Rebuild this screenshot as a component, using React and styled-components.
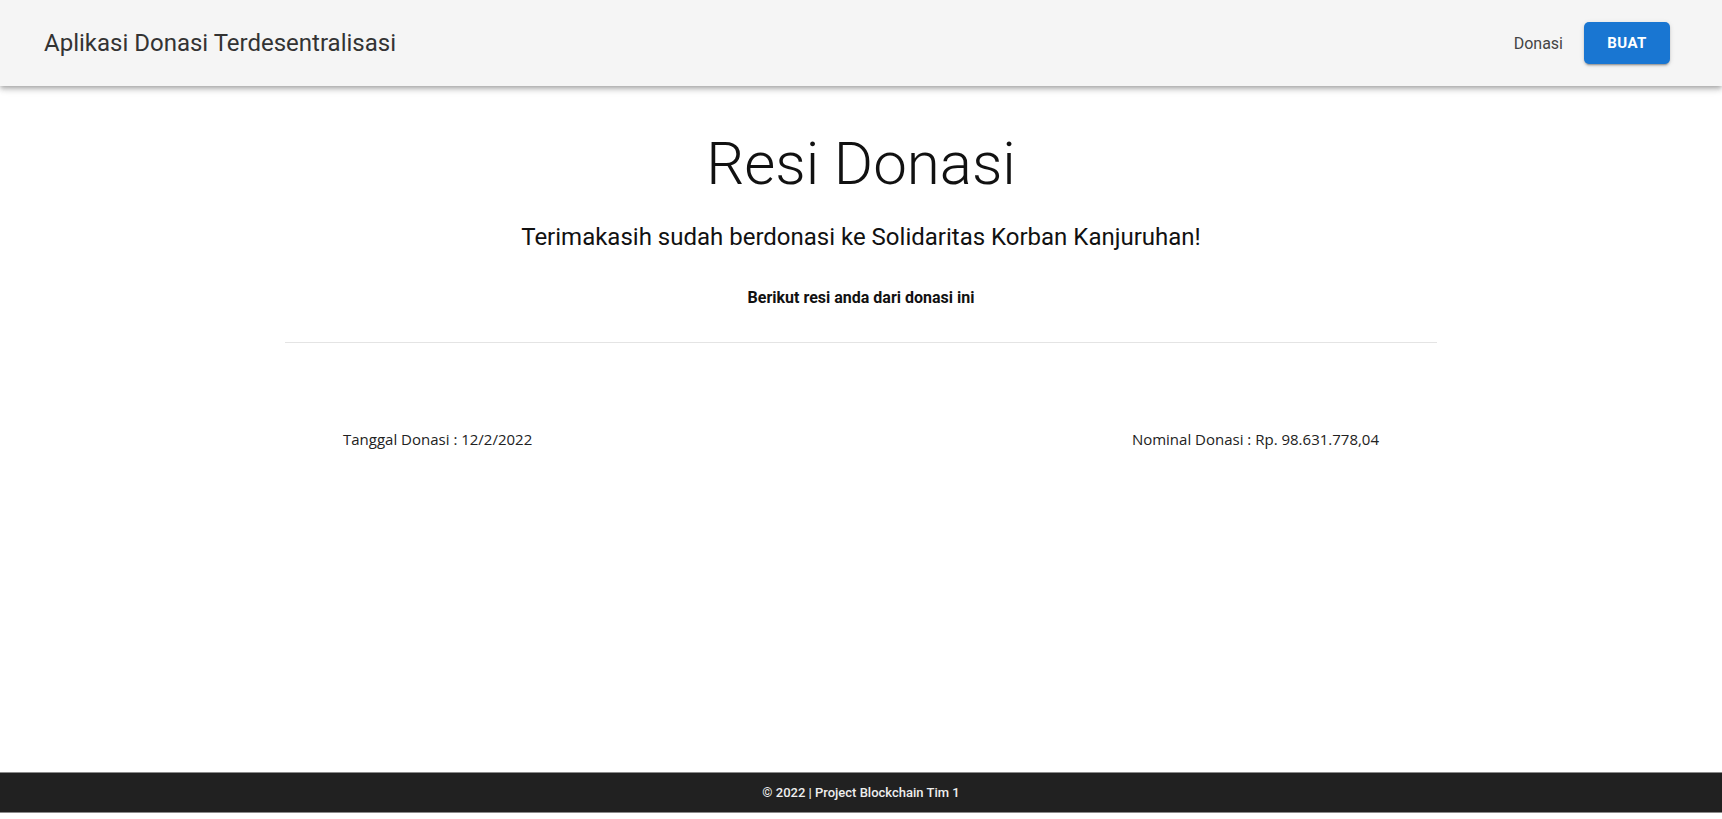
import React from 'react';
import styled, { createGlobalStyle } from 'styled-components';

const GlobalStyle = createGlobalStyle`
    html, body {
        margin: 0;
        padding: 0;
        background: #ffffff;
        font-family: Roboto, "Liberation Sans", sans-serif;
    }
`

const Page = styled.div`
    display: flex;
    flex-direction: column;
    min-height: 819px;
`

const AppBar = styled.header`
    height: 86px;
    background: #f5f5f5;
    box-shadow: 0px 2px 4px -1px rgba(0,0,0,0.2), 0px 4px 5px 0px rgba(0,0,0,0.14), 0px 1px 10px 0px rgba(0,0,0,0.12);
    display: flex;
    align-items: center;
    justify-content: space-between;
    padding: 0 52px 0 44px;
    position: relative;
    z-index: 2;
`

const Brand = styled.div`
    font-size: 24px;
    color: #333333;
`

const Nav = styled.nav`
    display: flex;
    align-items: center;
    gap: 21px;
`

const NavLink = styled.a`
    font-size: 16px;
    color: #444444;
    text-decoration: none;
`

const PrimaryButton = styled.button`
    width: 86px;
    height: 42px;
    border: none;
    border-radius: 5px;
    background: #1976d2;
    color: #ffffff;
    font-family: Roboto, "Liberation Sans", sans-serif;
    font-weight: 700;
    font-size: 15px;
    letter-spacing: 0.4px;
    box-shadow: 0px 3px 1px -2px rgba(0,0,0,0.2), 0px 2px 2px 0px rgba(0,0,0,0.14), 0px 1px 5px 0px rgba(0,0,0,0.12);
`

const Main = styled.main`
    flex: 1;
    width: 100%;
    max-width: 1200px;
    margin: 0 auto;
    padding: 0 24px;
    box-sizing: border-box;
`

const Title = styled.h1`
    margin: 42px 0 0;
    text-align: center;
    font-weight: 300;
    font-size: 60px;
    line-height: 1.2;
    color: #111111;
`

const Subtitle = styled.h2`
    margin: 22px 0 0;
    text-align: center;
    font-weight: 400;
    font-size: 24px;
    line-height: 1.3;
    color: #111111;
`

const Lead = styled.p`
    margin: 35px 0 0;
    text-align: center;
    font-weight: 700;
    font-size: 16px;
    color: #111111;
`

const Divider = styled.hr`
    margin: 35px 0 0;
    border: none;
    border-top: 1px solid #e4e4e4;
`

const InfoRow = styled.div`
    display: flex;
    justify-content: space-between;
    padding: 0 58px;
    margin-top: 86px;
`

const InfoText = styled.span`
    font-family: "Open Sans", "Noto Sans", sans-serif;
    font-size: 15px;
    color: #222222;
`

const Footer = styled.footer`
    height: 41px;
    margin-bottom: 6px;
    background: #212121;
    border-top: 1px solid #8a8a8a;
    border-bottom: 1px solid #8a8a8a;
    box-sizing: border-box;
    display: flex;
    align-items: center;
    justify-content: center;
    color: #eeeeee;
    font-size: 13px;
    font-weight: 500;
`

const App = () => {
    return (
        <Page>
            <GlobalStyle />
            <AppBar>
                <Brand>Aplikasi Donasi Terdesentralisasi</Brand>
                <Nav>
                    <NavLink href="#">Donasi</NavLink>
                    <PrimaryButton>BUAT</PrimaryButton>
                </Nav>
            </AppBar>
            <Main>
                <Title>Resi Donasi</Title>
                <Subtitle>Terimakasih sudah berdonasi ke Solidaritas Korban Kanjuruhan!</Subtitle>
                <Lead>Berikut resi anda dari donasi ini</Lead>
                <Divider />
                <InfoRow>
                    <InfoText>Tanggal Donasi : 12/2/2022</InfoText>
                    <InfoText>Nominal Donasi : Rp. 98.631.778,04</InfoText>
                </InfoRow>
            </Main>
            <Footer>© 2022 | Project Blockchain Tim 1</Footer>
        </Page>
    )
}

export default App;
